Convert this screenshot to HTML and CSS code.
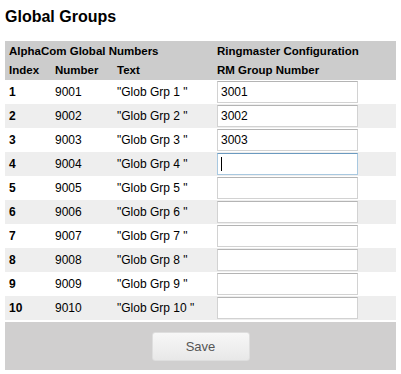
FILE: index.html
```html
<!DOCTYPE html>
<html lang="en">
<head>
    <meta charset="UTF-8">
    <meta name="viewport" content="width=device-width, initial-scale=1.0">
    <title>Global Groups</title>
    <link rel="stylesheet" href="styles.css">
</head>
<body>
    <h1>Global Groups</h1>
    <form class="groups-form">
        <table class="groups-table">
            <thead>
                <tr>
                    <th colspan="3">AlphaCom Global Numbers</th>
                    <th>Ringmaster Configuration</th>
                </tr>
                <tr>
                    <th class="col-index">Index</th>
                    <th class="col-number">Number</th>
                    <th class="col-text">Text</th>
                    <th>RM Group Number</th>
                </tr>
            </thead>
            <tbody>
                <tr>
                    <td class="index">1</td><td>9001</td><td>"Glob Grp 1 "</td>
                    <td><input type="text" value="3001"></td>
                </tr>
                <tr>
                    <td class="index">2</td><td>9002</td><td>"Glob Grp 2 "</td>
                    <td><input type="text" value="3002"></td>
                </tr>
                <tr>
                    <td class="index">3</td><td>9003</td><td>"Glob Grp 3 "</td>
                    <td><input type="text" value="3003"></td>
                </tr>
                <tr>
                    <td class="index">4</td><td>9004</td><td>"Glob Grp 4 "</td>
                    <td>
                        <div class="input-wrap">
                            <input type="text" class="focused" value="">
                            <span class="caret"></span>
                        </div>
                    </td>
                </tr>
                <tr>
                    <td class="index">5</td><td>9005</td><td>"Glob Grp 5 "</td>
                    <td><input type="text"></td>
                </tr>
                <tr>
                    <td class="index">6</td><td>9006</td><td>"Glob Grp 6 "</td>
                    <td><input type="text"></td>
                </tr>
                <tr>
                    <td class="index">7</td><td>9007</td><td>"Glob Grp 7 "</td>
                    <td><input type="text"></td>
                </tr>
                <tr>
                    <td class="index">8</td><td>9008</td><td>"Glob Grp 8 "</td>
                    <td><input type="text"></td>
                </tr>
                <tr>
                    <td class="index">9</td><td>9009</td><td>"Glob Grp 9 "</td>
                    <td><input type="text"></td>
                </tr>
                <tr>
                    <td class="index">10</td><td>9010</td><td>"Glob Grp 10 "</td>
                    <td><input type="text"></td>
                </tr>
            </tbody>
        </table>
        <div class="form-footer">
            <button type="button" class="save-btn">Save</button>
        </div>
    </form>
</body>
</html>
```

FILE: styles.css
```css
body {
    margin: 5px;
    font-family: "Liberation Sans", Arial, sans-serif;
    font-size: 12px;
    color: #000;
    background-color: #fff;
}
h1 {
    margin: 2px 0 14px 0;
    font-size: 16px;
    line-height: 20px;
}
.groups-form {
    width: 391px;
}
.groups-table {
    width: 100%;
    border-collapse: collapse;
}
.groups-table th {
    background-color: #cccccc;
    text-align: left;
    font-weight: bold;
    font-size: 11.5px;
    height: 19.5px;
    padding: 0 4px;
    white-space: nowrap;
}
.groups-table td {
    height: 24px;
    padding: 0 4px;
    white-space: nowrap;
}
.col-index {
    width: 38px;
}
.col-number {
    width: 54px;
}
.col-text {
    width: 92px;
}
.groups-table tbody tr:nth-child(even) td {
    background-color: #eeeeee;
}
.index {
    font-weight: bold;
}
.groups-table input {
    display: block;
    box-sizing: border-box;
    width: 141px;
    height: 22px;
    margin: 0;
    padding: 0 3px;
    border: 1px solid #d2d2d2;
    border-top-color: #b4b4b4;
    background-color: #fff;
    font-family: "Liberation Sans", Arial, sans-serif;
    font-size: 12px;
    color: #000;
}
.groups-table input.focused,
.groups-table input:focus {
    outline: none;
    border-color: #a8c8e0;
    border-top-color: #6b9ac0;
}
.input-wrap {
    position: relative;
    width: 141px;
}
.caret {
    position: absolute;
    left: 4px;
    top: 4px;
    width: 1px;
    height: 14px;
    background-color: #000;
}
.form-footer {
    margin-top: 2px;
    height: 48px;
    background-color: #d0cfcf;
    display: flex;
    justify-content: center;
    align-items: center;
}
.save-btn {
    width: 98px;
    height: 29px;
    border: 1px solid #dedede;
    border-radius: 3px;
    background: linear-gradient(#f7f7f7, #e8e8e8);
    font-family: "Liberation Sans", Arial, sans-serif;
    font-size: 13px;
    color: #555;
    cursor: pointer;
}
.save-btn:hover {
    background: linear-gradient(#fafafa, #ececec);
}
```
